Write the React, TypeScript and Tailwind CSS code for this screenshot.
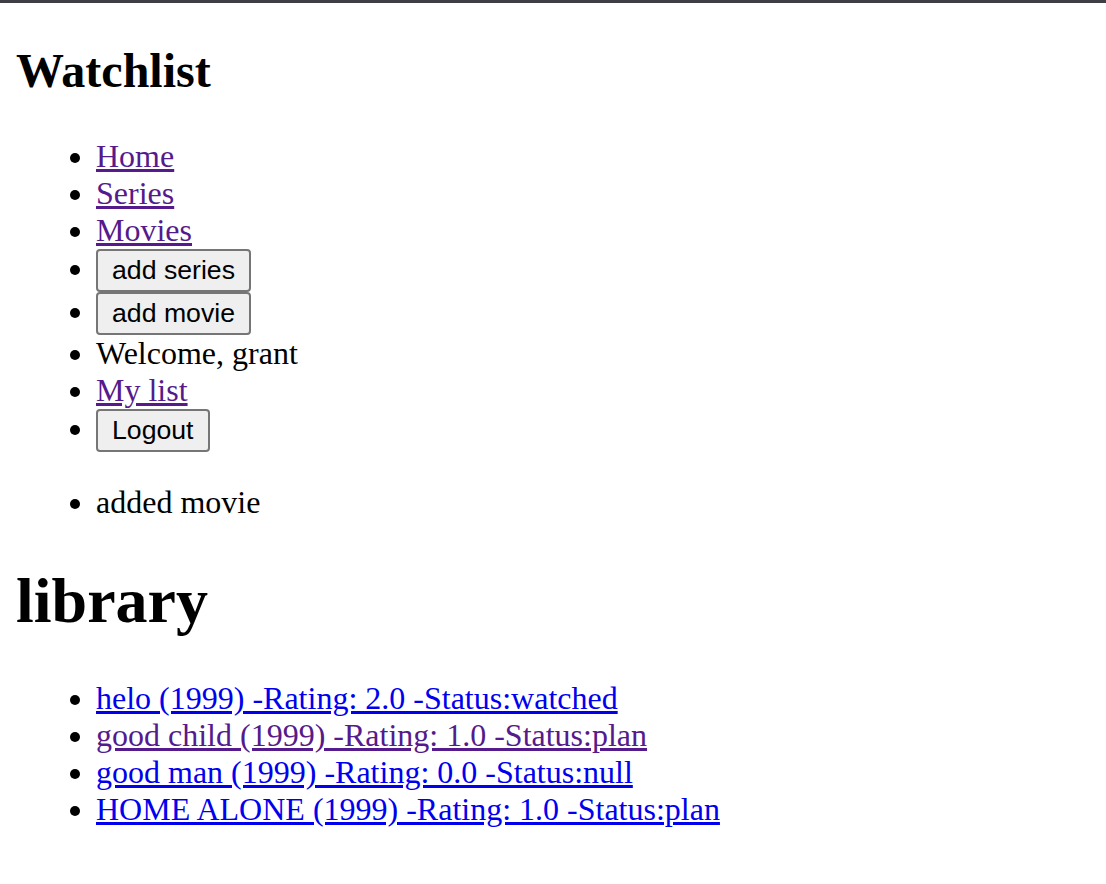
import React from "react";

const visited = "text-[#551a8b] underline";
const fresh = "text-[#0000ee] underline";

const NavButton = ({ label }: { label: string }) => (
  <button className="inline-block cursor-default rounded-[4px] border-2 border-[#767676] bg-[#efefef] px-[14px] py-[4px] font-['Liberation_Sans',Arial,sans-serif] text-[26.67px] leading-[normal] text-black">
    {label}
  </button>
);

const library = [
  { text: "helo (1999) -Rating: 2.0 -Status:watched", seen: false },
  { text: "good child (1999) -Rating: 1.0 -Status:plan", seen: true },
  { text: "good man (1999) -Rating: 0.0 -Status:null", seen: false },
  { text: "HOME ALONE (1999) -Rating: 1.0 -Status:plan", seen: false },
];

const App = () => {
  return (
    <div className="min-h-screen bg-white font-['Liberation_Serif','Times_New_Roman',serif] text-[32px] leading-[normal] text-black">
      {/* window edge */}
      <div className="h-[3px] bg-[#3f3d46]" />

      <div className="px-4 pb-4">
        <h2 className="my-[39.84px] text-[48px] font-bold leading-[normal]">Watchlist</h2>

        {/* Nav */}
        <ul className="my-8 list-disc pl-[80px]">
          <li>
            <a href="#" className={visited}>Home</a>
          </li>
          <li>
            <a href="#" className={visited}>Series</a>
          </li>
          <li>
            <a href="#" className={visited}>Movies</a>
          </li>
          <li>
            <NavButton label="add series" />
          </li>
          <li>
            <NavButton label="add movie" />
          </li>
          <li>Welcome, grant</li>
          <li>
            <a href="#" className={visited}>My list</a>
          </li>
          <li>
            <NavButton label="Logout" />
          </li>
        </ul>

        {/* Flash messages */}
        <ul className="my-8 list-disc pl-[80px]">
          <li>added movie</li>
        </ul>

        <h1 className="my-[42.88px] text-[64px] font-bold leading-[normal]">library</h1>

        <ul className="my-8 list-disc pl-[80px]">
          {library.map((item) => (
            <li key={item.text}>
              <a href="#" className={item.seen ? visited : fresh}>
                {item.text}
              </a>
            </li>
          ))}
        </ul>
      </div>
    </div>
  );
};

export default App;
